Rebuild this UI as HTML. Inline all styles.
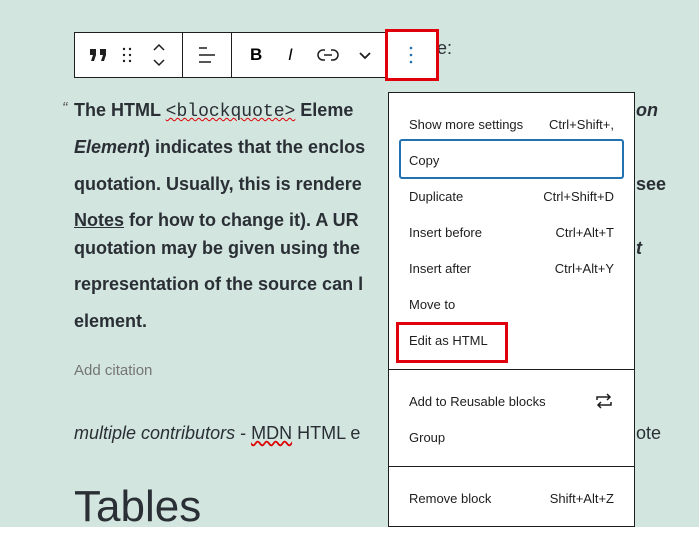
<!DOCTYPE html><html><head><style>
body{margin:0;width:699px;height:543px;background:#fff;position:relative;overflow:hidden;font-family:"Liberation Sans",sans-serif}
.bg{position:absolute;left:0;top:0;width:699px;height:527px;background:#d3e5df}
.a{position:absolute;white-space:nowrap}
.q{font-weight:bold;font-size:18px;color:#2a2f35;left:74px}
.tb{position:absolute;left:74px;top:32px;width:362px;height:46px;background:#fff;border:1px solid #1e1e1e;box-sizing:border-box}
.sep{position:absolute;top:0;width:1px;height:44px;background:#1e1e1e}
.m{position:absolute;left:388px;top:92px;width:247px;height:435px;background:#fff;border:1px solid #1e1e1e;box-sizing:border-box;font-size:13px;color:#1e1e1e}
.m .a{left:20px}
.m .r{right:20px;left:auto}
</style></head><body>
<div class="bg"></div>
<div class="a" style="left:437px;top:38px;font-size:18px;color:#2a2f35">e:</div>
<div class="tb">
<svg class="a" style="left:14px;top:15px" width="20" height="14"><path d="M1 1h6v6l-2 6H2l2-6H1zM11 1h6v6l-2 6h-3l2-6h-3z" fill="#1e1e1e"/></svg>
<svg class="a" style="left:47px;top:14px" width="10" height="16"><g fill="#1e1e1e"><circle cx="2" cy="2" r="1.2"/><circle cx="8" cy="2" r="1.2"/><circle cx="2" cy="8" r="1.2"/><circle cx="8" cy="8" r="1.2"/><circle cx="2" cy="14" r="1.2"/><circle cx="8" cy="14" r="1.2"/></g></svg>
<svg class="a" style="left:74px;top:8px" width="20" height="28"><path d="M5 9l5-5 5 5M5 19l5 5 5-5" fill="none" stroke="#1e1e1e" stroke-width="1.5"/></svg>
<div class="sep" style="left:107px"></div>
<svg class="a" style="left:122px;top:12px" width="20" height="20"><path d="M2 3h8M2 10h16M2 17h12" stroke="#1e1e1e" stroke-width="1.5"/></svg>
<div class="sep" style="left:156px"></div>
<span class="a" style="left:175px;top:12px;font-weight:bold;font-size:17px">B</span>
<span class="a" style="left:213px;top:12px;font-style:italic;font-size:17px">I</span>
<svg class="a" style="left:242px;top:14px" width="22" height="16"><path d="M8 3H6a5 5 0 000 10h2M14 3h2a5 5 0 010 10h-2M7 8h8" fill="none" stroke="#1e1e1e" stroke-width="1.5"/></svg>
<svg class="a" style="left:283px;top:16px" width="14" height="12"><path d="M2 4l5 5 5-5" fill="none" stroke="#1e1e1e" stroke-width="1.8"/></svg>
</div>
<div class="a" style="left:385px;top:29px;width:54px;height:52px;border:3px solid #e0000b;box-sizing:border-box;background:#fff"></div>
<svg class="a" style="left:408px;top:44px" width="6" height="22"><circle cx="3" cy="4" r="1.3" fill="#2271b1"/><circle cx="3" cy="11" r="1.3" fill="#2271b1"/><circle cx="3" cy="18" r="1.3" fill="#2271b1"/></svg>
<div class="a" style="left:62px;top:100px;font-size:16px;color:#555;font-style:italic">“</div>
<div class="a q" style="top:100px">The HTML <span style="font-family:'Liberation Mono',monospace;font-weight:normal;text-decoration:underline wavy #d00;text-decoration-thickness:1px">&lt;blockquote&gt;</span> Eleme</div>
<div class="a q" style="top:137px"><i>Element</i>) indicates that the enclos</div>
<div class="a q" style="top:174px">quotation. Usually, this is rendere</div>
<div class="a q" style="top:210px"><u>Notes</u> for how to change it). A UR</div>
<div class="a q" style="top:238px">quotation may be given using the</div>
<div class="a q" style="top:274px">representation of the source can l</div>
<div class="a q" style="top:311px">element.</div>
<div class="a q" style="left:636px;top:100px"><i>on</i></div>
<div class="a q" style="left:636px;top:174px">see</div>
<div class="a q" style="left:636px;top:238px"><i>t</i></div>
<div class="a" style="left:74px;top:362px;font-size:15px;color:#757575">Add citation</div>
<div class="a" style="left:74px;top:423px;font-size:18px;color:#2a2f35"><i>multiple contributors</i> - <span style="text-decoration:underline wavy #d00">MDN</span> HTML e</div>
<div class="a" style="left:636px;top:423px;font-size:18px;color:#2a2f35">ote</div>
<div class="a" style="left:74px;top:482px;font-size:44px;color:#2a2f35">Tables</div>
<div class="bg" style="top:527px;height:16px;background:#fff"></div>
<div class="m">
<span class="a" style="top:24px">Show more settings</span><span class="a r" style="top:24px">Ctrl+Shift+,</span>
<div class="a" style="left:10px;top:46px;width:225px;height:40px;border:2px solid #2271b1;border-radius:3px;box-sizing:border-box"></div>
<span class="a" style="top:60px">Copy</span>
<span class="a" style="top:96px">Duplicate</span><span class="a r" style="top:96px">Ctrl+Shift+D</span>
<span class="a" style="top:132px">Insert before</span><span class="a r" style="top:132px">Ctrl+Alt+T</span>
<span class="a" style="top:168px">Insert after</span><span class="a r" style="top:168px">Ctrl+Alt+Y</span>
<span class="a" style="top:204px">Move to</span>
<div class="a" style="left:7px;top:229px;width:112px;height:41px;border:3px solid #e0000b;box-sizing:border-box"></div>
<span class="a" style="top:240px">Edit as HTML</span>
<div class="a" style="left:0;top:276px;width:245px;height:1px;background:#1e1e1e"></div>
<span class="a" style="top:301px">Add to Reusable blocks</span>
<svg class="a" style="left:205px;top:297px" width="20" height="22"><path d="M3 10V7h13M13 4l3 3-3 3M17 12v3H4M7 18l-3-3 3-3" fill="none" stroke="#1e1e1e" stroke-width="1.5"/></svg>
<span class="a" style="top:337px">Group</span>
<div class="a" style="left:0;top:373px;width:245px;height:1px;background:#1e1e1e"></div>
<span class="a" style="top:398px">Remove block</span><span class="a r" style="top:398px">Shift+Alt+Z</span>
</div>
</body></html>
